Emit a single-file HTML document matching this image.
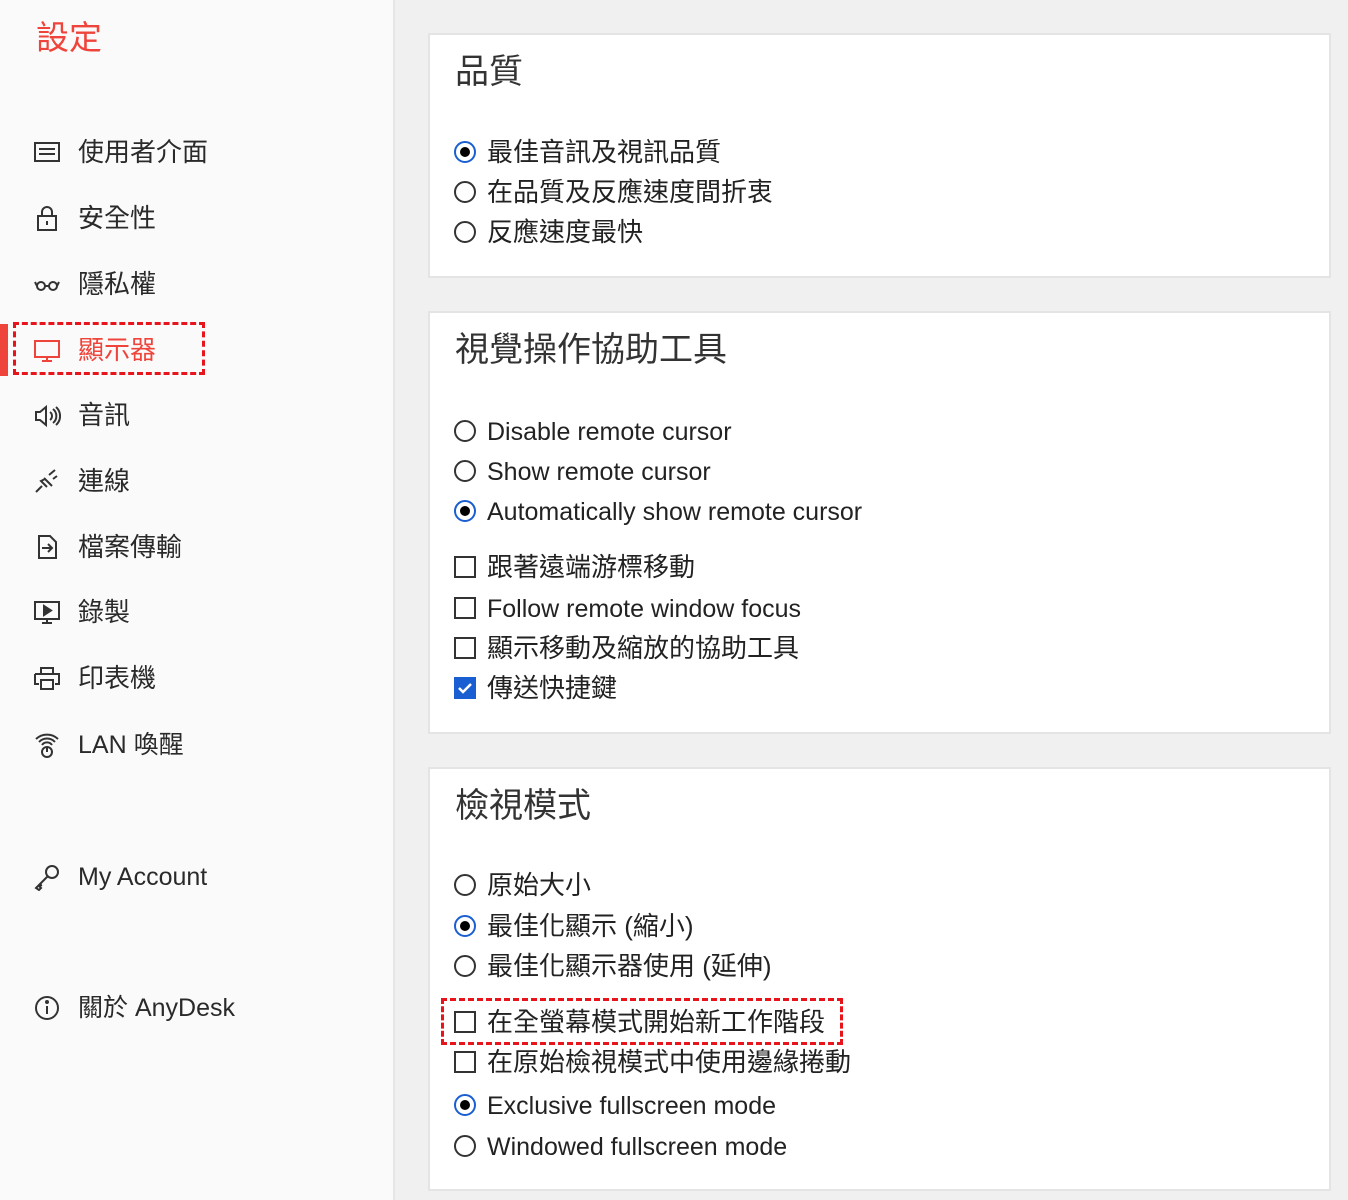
<!DOCTYPE html>
<html><head><meta charset="utf-8"><style>
*{margin:0;padding:0;box-sizing:border-box}
body{width:1348px;height:1200px;background:#f0f0f0;font-family:"Liberation Sans","Noto Sans CJK TC",sans-serif;color:#222;position:relative;overflow:hidden}
.side{position:absolute;left:0;top:0;width:395px;height:1200px;background:#fafafa;border-right:2px solid #e6e6e6}
.t{position:absolute;white-space:nowrap;line-height:1}
.nav{font-size:26px;left:78px;color:#2a2a2a}
.ic{position:absolute;left:33px;width:28px;height:28px}
.card{position:absolute;left:428px;width:903px;background:#fff;border:2px solid #e4e4e4}
.h{font-size:34px;left:455px;color:#333}
.o{font-size:26px;left:487px;color:#222}
.l{font-size:25px}
.r{position:absolute;left:454px;width:22px;height:22px;border:2px solid #333;border-radius:50%}
.r.on{border-color:#1a5fd1}
.r.on::after{content:"";position:absolute;left:4px;top:4px;width:10px;height:10px;border-radius:50%;background:#000}
.c{position:absolute;left:454px;width:22px;height:22px;border:2px solid #333}
.c.on{background:#1a5fd1;border-color:#1a5fd1}
.dash{position:absolute;border:3px dashed #e8141b}
</style></head><body>
<div class="side"></div>
<div class="t" style="left:36px;top:21px;font-size:33px;color:#ef443b">設定</div>

<svg class="ic" style="top:138px" viewBox="0 0 28 28" fill="none" stroke="#333" stroke-width="2"><rect x="2" y="5" width="24" height="18"/><line x1="6" y1="11" x2="22" y2="11"/><line x1="6" y1="16" x2="22" y2="16"/></svg>
<div class="t nav" style="top:139px">使用者介面</div>
<svg class="ic" style="top:204px" viewBox="0 0 28 28" fill="none" stroke="#333" stroke-width="2"><rect x="5" y="12" width="18" height="14"/><path d="M9 12V8a5 5 0 0 1 10 0v4"/><line x1="14" y1="17" x2="14" y2="21"/></svg>
<div class="t nav" style="top:205px">安全性</div>
<svg class="ic" style="top:270px" viewBox="0 0 28 28" fill="none" stroke="#333" stroke-width="2"><circle cx="8" cy="16" r="4"/><circle cx="20" cy="16" r="4"/><path d="M12 16h4M4 16L2 12M24 16l2-4"/></svg>
<div class="t nav" style="top:271px">隱私權</div>
<div style="position:absolute;left:0;top:324px;width:8px;height:52px;background:#ef443b"></div>
<div class="dash" style="left:13px;top:322px;width:192px;height:53px"></div>
<svg class="ic" style="top:336px" viewBox="0 0 28 28" fill="none" stroke="#ef443b" stroke-width="2"><rect x="2" y="5" width="24" height="16"/><path d="M14 21v4M9 25h10"/></svg>
<div class="t nav" style="top:337px;color:#ef443b">顯示器</div>
<svg class="ic" style="top:402px" viewBox="0 0 28 28" fill="none" stroke="#333" stroke-width="2"><path d="M3 10h4l6-5v18l-6-5H3z"/><path d="M17 10a5 5 0 0 1 0 8M20 7a9 9 0 0 1 0 14M23 5a12 12 0 0 1 0 18"/></svg>
<div class="t nav" style="top:402px">音訊</div>
<svg class="ic" style="top:467px" viewBox="0 0 28 28" fill="none" stroke="#333" stroke-width="2"><path d="M3 25l6-6M8 14l6 6M11 11l8 8M16 8l6-5M20 12l4-3M12 12l-4 2 6 6"/></svg>
<div class="t nav" style="top:468px">連線</div>
<svg class="ic" style="top:533px" viewBox="0 0 28 28" fill="none" stroke="#333" stroke-width="2"><path d="M6 3h11l6 6v16H6z"/><path d="M9 15h10M15 11l4 4-4 4"/></svg>
<div class="t nav" style="top:534px">檔案傳輸</div>
<svg class="ic" style="top:598px" viewBox="0 0 28 28" fill="none" stroke="#333" stroke-width="2"><rect x="2" y="4" width="24" height="17"/><path d="M14 21v4M9 25h10"/><path d="M11 8l7 4.5-7 4.5z" fill="#333"/></svg>
<div class="t nav" style="top:599px">錄製</div>
<svg class="ic" style="top:664px" viewBox="0 0 28 28" fill="none" stroke="#333" stroke-width="2"><path d="M8 10V4h12v6M2 10h24v10h-4M6 20H2V10M8 16h12v9H8z"/></svg>
<div class="t nav" style="top:665px">印表機</div>
<svg class="ic" style="top:731px" viewBox="0 0 28 28" fill="none" stroke="#333" stroke-width="2"><path d="M3 8a16 16 0 0 1 22 0M6 11a11 11 0 0 1 16 0M9 14a6 6 0 0 1 10 0"/><circle cx="14" cy="21" r="5"/><line x1="14" y1="17" x2="14" y2="21"/></svg>
<div class="t nav l" style="top:733px">LAN 喚醒</div>
<svg class="ic" style="top:863px" viewBox="0 0 28 28" fill="none" stroke="#333" stroke-width="2"><circle cx="19" cy="9" r="6"/><path d="M15 13L3 25l3 2 2-2-2-2 3-1"/></svg>
<div class="t nav l" style="top:865px">My Account</div>
<svg class="ic" style="top:994px" viewBox="0 0 28 28" fill="none" stroke="#333" stroke-width="2"><circle cx="14" cy="14" r="11"/><line x1="14" y1="12" x2="14" y2="20"/><circle cx="14" cy="8" r="1" fill="#333"/></svg>
<div class="t nav l" style="top:996px">關於 AnyDesk</div>

<div class="card" style="top:33px;height:245px"></div>
<div class="card" style="top:311px;height:423px"></div>
<div class="card" style="top:767px;height:424px"></div>

<div class="t h" style="top:55px">品質</div>
<div class="r on" style="top:141px"></div><div class="t o" style="top:139px">最佳音訊及視訊品質</div>
<div class="r" style="top:181px"></div><div class="t o" style="top:179px">在品質及反應速度間折衷</div>
<div class="r" style="top:221px"></div><div class="t o" style="top:219px">反應速度最快</div>

<div class="t h" style="top:333px">視覺操作協助工具</div>
<div class="r" style="top:420px"></div><div class="t o l" style="top:420px">Disable remote cursor</div>
<div class="r" style="top:460px"></div><div class="t o l" style="top:460px">Show remote cursor</div>
<div class="r on" style="top:500px"></div><div class="t o l" style="top:500px">Automatically show remote cursor</div>
<div class="c" style="top:556px"></div><div class="t o" style="top:554px">跟著遠端游標移動</div>
<div class="c" style="top:597px"></div><div class="t o l" style="top:597px">Follow remote window focus</div>
<div class="c" style="top:637px"></div><div class="t o" style="top:635px">顯示移動及縮放的協助工具</div>
<div class="c on" style="top:677px"><svg width="18" height="18" viewBox="0 0 18 18" style="position:absolute;left:0;top:0"><path d="M3 9l4 4 8-8" stroke="#fff" stroke-width="2.5" fill="none"/></svg></div><div class="t o" style="top:675px">傳送快捷鍵</div>

<div class="t h" style="top:789px">檢視模式</div>
<div class="r" style="top:874px"></div><div class="t o" style="top:872px">原始大小</div>
<div class="r on" style="top:915px"></div><div class="t o" style="top:913px">最佳化顯示 (縮小)</div>
<div class="r" style="top:955px"></div><div class="t o" style="top:953px">最佳化顯示器使用 (延伸)</div>
<div class="dash" style="left:441px;top:998px;width:402px;height:47px"></div>
<div class="c" style="top:1011px"></div><div class="t o" style="top:1009px">在全螢幕模式開始新工作階段</div>
<div class="c" style="top:1051px"></div><div class="t o" style="top:1049px">在原始檢視模式中使用邊緣捲動</div>
<div class="r on" style="top:1094px"></div><div class="t o l" style="top:1094px">Exclusive fullscreen mode</div>
<div class="r" style="top:1135px"></div><div class="t o l" style="top:1135px">Windowed fullscreen mode</div>
</body></html>
